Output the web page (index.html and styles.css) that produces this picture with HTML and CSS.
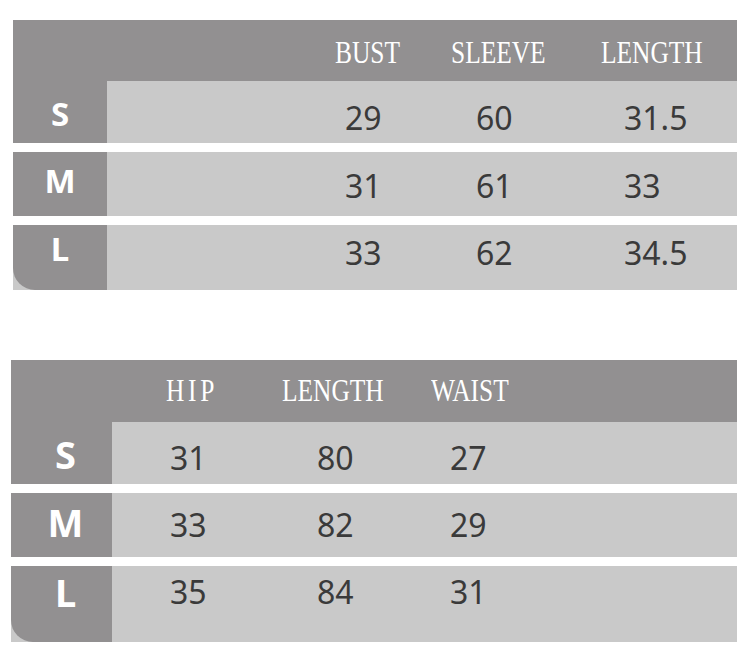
FILE: index.html
```html
<!DOCTYPE html>
<html lang="en">
<head>
<meta charset="utf-8">
<title>Size chart</title>
<link rel="stylesheet" href="styles.css">
</head>
<body>
  <section class="chart chart-top">
    <div class="head">
      <span class="h">BUST</span>
      <span class="h">SLEEVE</span>
      <span class="h">LENGTH</span>
    </div>
    <div class="row r-s">
      <div class="size">S</div>
      <div class="vals"><span>29</span><span>60</span><span>31.5</span></div>
    </div>
    <div class="row r-m">
      <div class="size">M</div>
      <div class="vals"><span>31</span><span>61</span><span>33</span></div>
    </div>
    <div class="row r-l">
      <div class="size">L</div>
      <div class="vals"><span>33</span><span>62</span><span>34.5</span></div>
    </div>
  </section>

  <section class="chart chart-bottom">
    <div class="head">
      <span class="h wide">HIP</span>
      <span class="h">LENGTH</span>
      <span class="h">WAIST</span>
    </div>
    <div class="row r-s">
      <div class="size">S</div>
      <div class="vals"><span>31</span><span>80</span><span>27</span></div>
    </div>
    <div class="row r-m">
      <div class="size">M</div>
      <div class="vals"><span>33</span><span>82</span><span>29</span></div>
    </div>
    <div class="row r-l">
      <div class="size">L</div>
      <div class="vals"><span>35</span><span>84</span><span>31</span></div>
    </div>
  </section>
</body>
</html>
```
FILE: styles.css
```css
* { box-sizing: border-box; }

body {
  margin: 0;
  background: #ffffff;
  font-family: "Noto Sans", "Liberation Sans", sans-serif;
}

.chart {
  display: flex;
  flex-direction: column;
}

.chart-top {
  margin: 20px 0 0 13px;
}

.chart-bottom {
  margin: 70px 0 0 11px;
}

/* header band */
.head {
  display: grid;
  background: #929091;
}

.chart-top .head {
  height: 61px;
  padding: 17px 0 0 322px;
  grid-template-columns: 116px 150px 1fr;
}

.chart-bottom .head {
  height: 62px;
  padding: 15px 0 0 155px;
  grid-template-columns: 116px 149px 1fr;
}

.h {
  display: block;
  font-family: "Liberation Serif", "Times New Roman", serif;
  font-size: 31px;
  line-height: 31px;
  color: #ffffff;
  white-space: nowrap;
  transform: scaleX(0.82);
  transform-origin: left top;
}

.h.wide {
  letter-spacing: 4.5px;
}

/* body rows */
.row {
  display: grid;
  background: #c9c9c9;
  height: var(--rh);
}

.row + .row {
  margin-top: 9px;
}

.chart-top .row { grid-template-columns: 94px 1fr; }
.chart-bottom .row { grid-template-columns: 101px 1fr; }

.size {
  background: #929091;
  color: #ffffff;
  font-weight: 700;
  text-align: center;
  padding-top: var(--lp);
}

.chart-top .size {
  font-size: 33px;
  line-height: 33px;
}

.chart-bottom .size {
  font-size: 38px;
  line-height: 38px;
  padding-left: 8px;
}

.row.r-l .size {
  border-bottom-left-radius: 22px;
}

.vals {
  display: grid;
  padding-top: var(--vp);
  font-size: 32px;
  line-height: 32px;
  color: #3a3a3a;
}

.chart-top .vals {
  padding-left: 238px;
  grid-template-columns: 131px 148px 1fr;
}

.chart-bottom .vals {
  padding-left: 58px;
  grid-template-columns: 147px 133px 1fr;
}

/* per-row metrics */
.chart-top .r-s { --rh: 62px; --vp: 21px; --lp: 16px; }
.chart-top .r-m { --rh: 64px; --vp: 18px; --lp: 12px; }
.chart-top .r-l { --rh: 65px; --vp: 12px; --lp: 7px; }

.chart-bottom .r-s { --rh: 62px; --vp: 20px; --lp: 13px; }
.chart-bottom .r-m { --rh: 64px; --vp: 16px; --lp: 10px; }
.chart-bottom .r-l { --rh: 76px; --vp: 10px; --lp: 7px; }
```
